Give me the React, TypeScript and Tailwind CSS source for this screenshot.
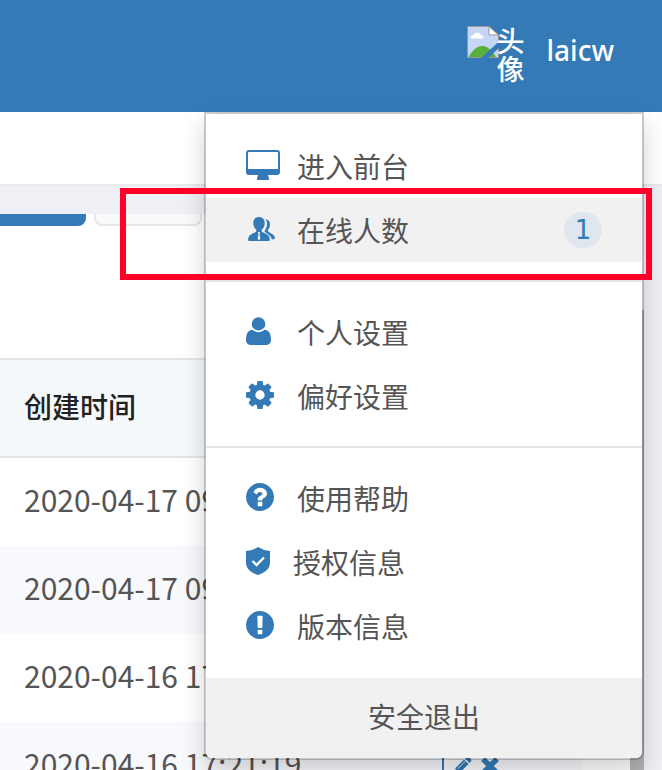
import type { ReactNode } from "react";

const CIRCLE =
  "M1536 896q0 209-103 385.5t-279.5 279.5-385.5 103-385.5-103-279.5-279.5-103-385.5 103-385.5 279.5-279.5 385.5-103 385.5 103 279.5 279.5 103 385.5z";

function Glyph({ d }: { d: string }) {
  return (
    <svg viewBox="0 128 1536 1536" className="size-7" fill="currentColor" fillRule="evenodd" aria-hidden="true">
      <path d={d} />
    </svg>
  );
}

const DesktopIcon = () => (
  <svg viewBox="0 0 34 30" className="h-[30px] w-[34px]" aria-hidden="true">
    <path
      fill="currentColor"
      fillRule="evenodd"
      d="M3 0h28a3 3 0 0 1 3 3v19a3 3 0 0 1-3 3h-9l1 3.500v1.500H11v-1.500l1-3.500H3a3 3 0 0 1-3-3V3a3 3 0 0 1 3-3zm0 2q-1 0-1 1v16h30V3q0-1-1-1z"
    />
  </svg>
);

const UsersIcon = () => (
  <svg viewBox="0 0 27 24" className="ml-0.5 h-6 w-[27px]" aria-hidden="true">
    <path
      fill="currentColor"
      d="M11 0c3.600 0 5.700 2.400 5.700 6 0 3-1.200 5.500-3 6.800v1.700c1 1.300 6.600 2.500 7.600 5.500.6 1.600.8 4-.5 4H1.200C-.4 24 0 21.500.700 20c1.200-2.800 6.600-4.200 7.600-5.500v-1.700C6.500 11.500 5.300 9 5.300 6 5.300 2.400 7.400 0 11 0z"
    />
    <path fill="#f1f1f1" d="M10.200 15h1.600l.2 1.200-.5 1 .9 4.600-1.400 1.400-1.400-1.400.9-4.600-.5-1z" />
    <path
      fill="currentColor"
      d="M17.300 2.200c2.800.2 4.700 2 4.700 5 0 2.200-.8 4.300-2 5.500v1.500c.9 1.300 5.300 2.700 6.500 5.200.6 1.400.4 2.900-.4 2.900h-2.400c-.5-3.600-3.500-5.100-7-7.400v-1.500c1.500-1.500 2.300-4.300 2.300-6.900 0-1.500-.5-3-1.700-4.300z"
    />
  </svg>
);

const UserIcon = () => (
  <svg viewBox="0 128 1280 1536" preserveAspectRatio="none" className="h-7 w-[25px]" fill="currentColor" aria-hidden="true">
    <path d="M1280 1399q0 109-62.500 187t-150.500 78h-854q-88 0-150.500-78t-62.500-187q0-85 8.500-160.500t31.500-152 58.500-131 94-89 134.500-34.500q131 128 313 128t313-128q76 0 134.500 34.500t94 89 58.500 131 31.500 152 8.500 160.500zm-290-887q0 150-102.500 250.500t-247.500 100.500-247.500-100.500-102.500-250.500 102.500-262.500 247.500-112.500 247.500 112.500 102.500 262.500z" />
  </svg>
);

const CogIcon = () => (
  <Glyph d="M1024 896q0-106-75-181t-181-75-181 75-75 181 75 181 181 75 181-75 75-181zm512-109v222q0 12-8 23t-20 13l-185 28q-19 54-39 91 35 50 107 138 10 12 10 25t-9 23q-27 37-99 108t-94 71q-12 0-26-9l-138-108q-44 23-91 38-16 136-29 186-7 28-36 28h-222q-14 0-24.500-8.500t-11.500-21.500l-28-184q-49-16-90-37l-141 107q-10 9-25 9-14 0-25-11-126-114-165-168-7-10-7-23 0-12 8-23 15-21 51-66.500t54-70.500q-27-50-41-99l-183-27q-13-2-21-12.500t-8-23.500v-222q0-12 8-23t19-13l186-28q14-46 39-92-40-57-107-138-10-12-10-24 0-10 9-23 26-36 98.500-107.500t94.500-71.500q13 0 26 10l138 107q44-23 91-38 16-136 29-186 7-28 36-28h222q14 0 24.500 8.500t11.500 21.500l28 184q49 16 90 37l142-107q9-9 24-9 13 0 25 10 129 119 165 170 7 8 7 22 0 12-8 23-15 21-51 66.500t-54 70.500q26 50 41 98l183 28q13 2 21 12.500t8 23.500z" />
);

const HelpIcon = () => (
  <Glyph
    d={
      "M896 1376v-192q0-14-9-23t-23-9h-192q-14 0-23 9t-9 23v192q0 14 9 23t23 9h192q14 0 23-9t9-23zM1152 704q0-88-55.500-163t-138.500-116-170-41q-243 0-371 213-15 24 8 42l132 100q7 6 19 6 16 0 25-12 53-68 86-92 34-24 86-24 48 0 85.500 26t37.500 59q0 38-20 61t-68 45q-63 28-115.500 86.500t-52.500 125.500v36q0 14 9 23t23 9h192q14 0 23-9t9-23q0-19 21.500-49.500t54.500-49.500q32-18 49-28.500t46-35 44.500-48 28-60.500 12.500-81z" +
      CIRCLE
    }
  />
);

const AlertIcon = () => (
  <Glyph
    d={
      "M896 1375v-190q0-14-9-23.500t-22-9.500h-192q-13 0-23 10t-10 23v190q0 13 10 23t23 10h192q13 0 22-9.500t9-23.500zM894 1031l18-621q0-12-10-18-10-8-24-8h-220q-14 0-24 8-10 6-10 18l17 621q0 10 10 17.500t24 7.500h185q14 0 23.500-7.500t10.500-17.500z" +
      CIRCLE
    }
  />
);

const ShieldIcon = () => (
  <svg viewBox="0 0 24 28" className="h-7 w-6" aria-hidden="true">
    <path fill="currentColor" d="M12 0q5.500 3.500 12 4v11.500c0 6-4.500 10-12 12.500C4.500 25.500 0 21.500 0 15.500V4Q6.500 3.500 12 0z" />
    <path fill="none" stroke="#fff" strokeWidth="2.400" d="M6.500 14l4 4 7.500-7.500" />
  </svg>
);

const BrokenImage = () => (
  <svg viewBox="0 0 32 32" className="size-8 shrink-0" aria-hidden="true">
    <path d="M.5.500H22L31.500 9v22.500H.5z" fill="#c6d6f6" stroke="#9c9690" />
    <path d="M4 12.500a3 3 0 0 1 2.500-3.500 4 4 0 0 1 7.500 0 2.500 2.500 0 0 1 2 3.500z" fill="#fff" />
    <path d="M1.500 31C6 23 11 19.500 16 20c5 .5 9 4.500 13 11z" fill="#57b039" />
    <path d="M32 15.500V22L21 32h-7z" fill="#337ab7" />
    <path d="M22 .500V9h9.500z" fill="#fff" stroke="#9c9690" />
  </svg>
);

const PencilIcon = () => (
  <svg viewBox="0 0 20 20" className="size-5" aria-hidden="true">
    <path
      fill="currentColor"
      d="M13 2.500l1.500-1.500q1.500-1 3.500 1t1 3.500L17.500 7zM12 3.500L16.500 8 7.500 17 3 12.500zM2 13.500L6.500 18 1 19z"
    />
    <path stroke="#e4e6e9" d="M6 12.500l7-7" />
  </svg>
);

const CrossIcon = () => (
  <svg viewBox="0 0 20 20" className="size-5" aria-hidden="true">
    <path fill="none" stroke="currentColor" strokeWidth="5.500" d="M3 3l14 14M17 3L3 17" />
  </svg>
);

type ItemProps = { icon: ReactNode; label: string; active?: boolean; badge?: string; compact?: boolean };

function MenuItem({ icon, label, active, badge, compact }: ItemProps) {
  return (
    <li>
      <a href="#" className={`flex h-16 items-center px-10 text-[#555] ${active ? "bg-[#f1f1f1]" : ""}`}>
        <span className={`shrink-0 pb-0.5 text-[#337ab7] ${compact ? "w-[47px]" : "w-[51px]"}`}>{icon}</span>
        <span>{label}</span>
        {badge && (
          <span className="ml-auto flex h-9 w-[38px] items-center justify-center rounded-full bg-[#dfe6ed] font-['DejaVu_Sans',sans-serif] text-[26px] leading-9 text-[#337ab7]">
            {badge}
          </span>
        )}
      </a>
    </li>
  );
}

const rows = ["2020-04-17 09:12:45", "2020-04-17 09:08:31", "2020-04-16 17:34:02", "2020-04-16 17:21:19"];

export default function App() {
  return (
    <div className="relative flex h-screen flex-col overflow-hidden bg-[#eef0f5] font-['Noto_Sans_CJK_SC',sans-serif] text-[28px] leading-10 text-[#555]">
      <header className="flex h-28 shrink-0 items-start justify-end bg-[#337ab7] pr-12 text-white">
        <button className="flex items-start pt-[26px] text-left font-medium">
          <BrokenImage />
          <span className="-ml-0.5 w-7 leading-7 break-all">头像</span>
          <span className="ml-[22px] pt-1 font-['Noto_Sans',sans-serif]">laicw</span>
        </button>
      </header>
      <div className="h-[74px] shrink-0 border-b-2 border-[#eaeaec] bg-white" />

      <main className="mt-7 mr-[18px] flex min-h-0 flex-1 overflow-hidden bg-white">
        <div className="min-w-0 flex-1">
          <div className="flex h-36 items-start gap-2">
            <button aria-label="新增" className="h-3 w-[86px] rounded-br-lg bg-[#337ab7]" />
            <button aria-label="更多" className="h-3 w-[108px] rounded-b-lg border-2 border-t-0 border-[#e6e6e6] bg-[#f9fafc]" />
          </div>
          <div className="pr-12">
            <table className="w-full border-separate border-spacing-0 text-left">
              <thead>
                <tr className="h-[100px] bg-[#f5f9fc]">
                  <th className="border-y-2 border-[#e5e5e5] pb-1 pl-6 font-medium text-[#222]">创建时间</th>
                  <th aria-label="操作" className="border-y-2 border-[#e5e5e5]" />
                </tr>
              </thead>
              <tbody>
                {rows.map((time) => (
                  <tr key={time} className="h-[88px] even:bg-[#f8f9fc]">
                    <td className="pb-1.5 pl-6 text-[30px] whitespace-nowrap">{time}</td>
                    <td className="w-[140px] text-[#337ab7]">
                      <span className="flex gap-2">
                        <button aria-label="编辑" className="border-l-2 border-[#337ab7] py-1 pl-2">
                          <PencilIcon />
                        </button>
                        <button aria-label="删除">
                          <CrossIcon />
                        </button>
                      </span>
                    </td>
                  </tr>
                ))}
              </tbody>
            </table>
          </div>
        </div>
        <div className="w-3.5 shrink-0 bg-[#f1f1f1] pt-24">
          <div className="h-full bg-[#b4b4b4]" />
        </div>
      </main>

      <nav className="absolute top-28 right-[18px] w-[440px] overflow-hidden rounded-b-lg border-2 border-black/20 bg-white bg-clip-padding shadow-[0_12px_24px_rgba(0,0,0,0.175)]">
        <ul className="border-b-2 border-[#e5e5e5] pt-5 pb-[18px]">
          <MenuItem icon={<DesktopIcon />} label="进入前台" />
          <MenuItem icon={<UsersIcon />} label="在线人数" active badge="1" />
        </ul>
        <ul className="border-b-2 border-[#e5e5e5] py-[18px]">
          <MenuItem icon={<UserIcon />} label="个人设置" />
          <MenuItem icon={<CogIcon />} label="偏好设置" />
        </ul>
        <ul className="pt-[18px] pb-5">
          <MenuItem icon={<HelpIcon />} label="使用帮助" />
          <MenuItem icon={<ShieldIcon />} label="授权信息" compact />
          <MenuItem icon={<AlertIcon />} label="版本信息" />
        </ul>
        <a href="#" className="block bg-[#f1f1f1] pt-[18px] pb-[22px] text-center">
          安全退出
        </a>
      </nav>

      <div className="pointer-events-none absolute top-[188px] right-2.5 h-[92px] w-[532px] border-6 border-[#ff0029]" />
    </div>
  );
}
